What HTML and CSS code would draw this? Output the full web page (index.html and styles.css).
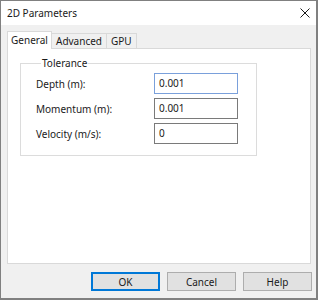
FILE: index.html
```html
<!DOCTYPE html>
<html lang="en">
<head>
  <meta charset="UTF-8" />
  <title>2D Parameters</title>
  <link rel="stylesheet" href="styles.css">
</head>
<body>
  <div class="window">
    <div class="titlebar">
      <span class="title">2D Parameters</span>
      <svg class="close" width="10" height="10" viewBox="0 0 10 10">
        <path d="M0.5 0.5 L9.5 9.5 M9.5 0.5 L0.5 9.5" stroke="#1a1a1a" stroke-width="1" />
      </svg>
    </div>

    <div class="content">
      <div class="tabs">
        <div class="tab active">General</div>
        <div class="tab">Advanced</div>
        <div class="tab">GPU</div>
      </div>

      <div class="panel">
        <fieldset class="grupo">
          <legend>Tolerance</legend>
          <div class="campos">
            <label>Depth (m):</label>
            <div class="input focus">0.001</div>
            <label>Momentum (m):</label>
            <div class="input">0.001</div>
            <label>Velocity (m/s):</label>
            <div class="input">0</div>
          </div>
        </fieldset>
      </div>

      <div class="acciones">
        <button class="btn default">OK</button>
        <button class="btn">Cancel</button>
        <button class="btn">Help</button>
      </div>
    </div>
  </div>
</body>
</html>
```

FILE: styles.css
```css
body {
  margin: 0;
  font-family: 'Noto Sans', sans-serif;
  font-size: 10px;
  color: #1a1a1a;
}

.window {
  width: 318px;
  height: 300px;
  box-sizing: border-box;
  border: 1px solid #808080;
  border-right-width: 2px;
  border-bottom-width: 2px;
  background: #f0f0f0;
  display: flex;
  flex-direction: column;
}

.titlebar {
  height: 24px;
  background: white;
  display: flex;
  align-items: center;
  justify-content: space-between;
  padding: 0 6px 0 6px;
}

.close {
  display: block;
}

.content {
  padding: 6px 5px 0 6px;
}

.tabs {
  display: flex;
  align-items: flex-end;
  height: 17px;
  position: relative;
  z-index: 1;
}

.tab {
  height: 15px;
  line-height: 14px;
  padding: 0 4px;
  border: 1px solid #d9d9d9;
  border-bottom: none;
  background: #f0f0f0;
  box-sizing: border-box;
}

.tab + .tab {
  border-left: none;
}

.tab.active {
  width: 45px;
  text-align: center;
  height: 18px;
  margin-bottom: -1px;
  background: white;
  padding: 0;
  line-height: 16px;
}

.panel {
  height: 216px;
  box-sizing: border-box;
  background: white;
  border: 1px solid #d9d9d9;
  padding: 7px 0 0 12px;
}

.grupo {
  width: 237px;
  box-sizing: border-box;
  margin: 0;
  border: 1px solid #dcdcdc;
  padding: 3px 0 11px 15px;
}

.grupo legend {
  padding: 0 1px;
  margin-left: 5px;
  line-height: 14px;
}

.campos {
  display: grid;
  grid-template-columns: 118px 84px;
  row-gap: 4px;
  align-items: center;
}

.input {
  height: 21px;
  box-sizing: border-box;
  border: 1px solid #7a7a7a;
  padding: 0 4px;
  line-height: 19px;
}

.input.focus {
  border-color: #7aa0db;
}

.acciones {
  display: flex;
  justify-content: flex-end;
  gap: 7px;
  margin-top: 8px;
  margin-right: -1px;
}

.btn {
  width: 69px;
  height: 19px;
  padding: 0;
  font-family: inherit;
  font-size: 10px;
  color: #1a1a1a;
  background: #e1e1e1;
  border: 1px solid #adadad;
}

.btn.default {
  border: 2px solid #0078d7;
}
```
